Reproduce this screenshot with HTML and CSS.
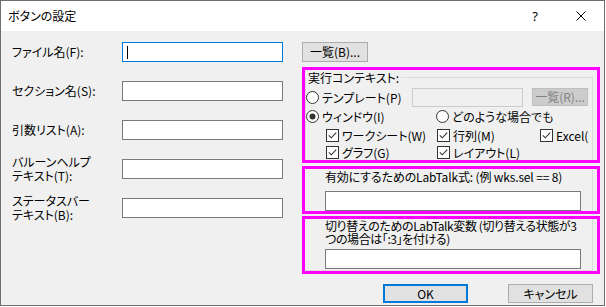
FILE: index.html
```html
<!DOCTYPE html>
<html lang="ja">
<head>
  <meta charset="UTF-8" />
  <title>ボタンの設定</title>
  <link rel="stylesheet" href="styles.css">
</head>
<body>
  <div class="window">
    <div class="titlebar">
      <span class="title">ボタンの設定</span>
      <div class="caption">
        <span class="cap-btn help">?</span>
        <span class="cap-btn">
          <svg width="10" height="10" viewBox="0 0 10 10"><path d="M0.5 0.5 L9.5 9.5 M9.5 0.5 L0.5 9.5" stroke="#000" stroke-width="1" fill="none"/></svg>
        </span>
      </div>
    </div>

    <div class="client">
      <div class="main">
        <div class="fields">
          <label>ファイル名(F):</label>
          <div class="edit focused"><span class="caret"></span></div>
          <label>セクション名(S):</label>
          <div class="edit"></div>
          <label>引数リスト(A):</label>
          <div class="edit"></div>
          <label>バルーンヘルプ<br>テキスト(T):</label>
          <div class="edit"></div>
          <label>ステータスバー<br>テキスト(B):</label>
          <div class="edit"></div>
        </div>

        <div class="side">
          <div class="btn btn-browse">一覧(B)...</div>

          <div class="mark box-context">
            <div class="group">
              <div class="group-title">実行コンテキスト:</div>

              <div class="row row-1">
                <div class="opt opt-template">
                  <svg class="radio" width="13" height="13" viewBox="0 0 13 13"><circle cx="6.5" cy="6.5" r="6" fill="#fff" stroke="#333"/></svg>
                  <span>テンプレート(P)</span>
                </div>
                <div class="edit disabled edit-template"></div>
                <div class="btn disabled btn-list">一覧(R)...</div>
              </div>

              <div class="row row-2">
                <div class="opt opt-window">
                  <svg class="radio" width="13" height="13" viewBox="0 0 13 13"><circle cx="6.5" cy="6.5" r="6" fill="#fff" stroke="#333"/><circle cx="6.5" cy="6.5" r="3" fill="#333"/></svg>
                  <span>ウィンドウ(I)</span>
                </div>
                <div class="opt">
                  <svg class="radio" width="13" height="13" viewBox="0 0 13 13"><circle cx="6.5" cy="6.5" r="6" fill="#fff" stroke="#333"/></svg>
                  <span>どのような場合でも</span>
                </div>
              </div>

              <div class="row row-3 checks">
                <div class="opt col-a">
                  <svg class="check" width="13" height="13" viewBox="0 0 13 13"><rect x="0.5" y="0.5" width="12" height="12" fill="#fff" stroke="#333"/><path d="M2.8 6.3 L5.3 8.8 L10.2 3.6" fill="none" stroke="#333" stroke-width="1.1"/></svg>
                  <span>ワークシート(W)</span>
                </div>
                <div class="opt col-b">
                  <svg class="check" width="13" height="13" viewBox="0 0 13 13"><rect x="0.5" y="0.5" width="12" height="12" fill="#fff" stroke="#333"/><path d="M2.8 6.3 L5.3 8.8 L10.2 3.6" fill="none" stroke="#333" stroke-width="1.1"/></svg>
                  <span>行列(M)</span>
                </div>
                <div class="opt col-c">
                  <svg class="check" width="13" height="13" viewBox="0 0 13 13"><rect x="0.5" y="0.5" width="12" height="12" fill="#fff" stroke="#333"/><path d="M2.8 6.3 L5.3 8.8 L10.2 3.6" fill="none" stroke="#333" stroke-width="1.1"/></svg>
                  <span>Excel(</span>
                </div>
              </div>

              <div class="row row-4 checks">
                <div class="opt col-a">
                  <svg class="check" width="13" height="13" viewBox="0 0 13 13"><rect x="0.5" y="0.5" width="12" height="12" fill="#fff" stroke="#333"/><path d="M2.8 6.3 L5.3 8.8 L10.2 3.6" fill="none" stroke="#333" stroke-width="1.1"/></svg>
                  <span>グラフ(G)</span>
                </div>
                <div class="opt col-b">
                  <svg class="check" width="13" height="13" viewBox="0 0 13 13"><rect x="0.5" y="0.5" width="12" height="12" fill="#fff" stroke="#333"/><path d="M2.8 6.3 L5.3 8.8 L10.2 3.6" fill="none" stroke="#333" stroke-width="1.1"/></svg>
                  <span>レイアウト(L)</span>
                </div>
              </div>
            </div>
          </div>

          <div class="mark box-enable">
            <div class="inner">
              <p class="caption-text">有効にするためのLabTalk式: (例 wks.sel == 8)</p>
              <div class="edit wide"></div>
            </div>
          </div>

          <div class="mark box-toggle">
            <div class="inner">
              <p class="caption-text two">切り替えのためのLabTalk変数 (切り替える状態が3<br>つの場合は「:3」を付ける)</p>
              <div class="edit wide"></div>
            </div>
          </div>
        </div>
      </div>

      <div class="footer">
        <div class="btn default">OK</div>
        <div class="btn">キャンセル</div>
      </div>
    </div>
  </div>
</body>
</html>
```

FILE: styles.css
```css
* {
  box-sizing: border-box;
  margin: 0;
  padding: 0;
}

body {
  font-family: "Noto Sans CJK JP", "Noto Sans", sans-serif;
  font-size: 12px;
  font-feature-settings: "palt";
  color: #000;
  background: #fff;
}

.window {
  width: 605px;
  height: 306px;
  border: 1px solid #6e6e6e;
  display: flex;
  flex-direction: column;
}

.titlebar {
  height: 30px;
  background: #fff;
  display: flex;
  align-items: center;
  justify-content: space-between;
}

.title {
  padding-left: 7px;
  line-height: 14px;
}

.caption {
  display: flex;
  height: 100%;
}

.cap-btn {
  width: 46px;
  display: flex;
  align-items: center;
  justify-content: center;
}

.cap-btn.help {
  font-family: "Noto Sans", sans-serif;
  font-size: 13px;
}

.client {
  flex: 1;
  background: #f0f0f0;
}

.main {
  display: flex;
  gap: 19px;
  padding-left: 11px;
}

.fields {
  display: grid;
  grid-template-columns: 110px 161px;
  grid-auto-rows: 20px;
  row-gap: 19px;
  padding-top: 11px;
  align-items: center;
}

.fields label {
  line-height: 14px;
}

.edit {
  height: 20px;
  background: #fff;
  border: 1px solid #7a7a7a;
  display: flex;
  align-items: center;
  padding-left: 4px;
}

.edit.focused {
  border-color: #0078d7;
}

.caret {
  width: 1px;
  height: 13px;
  background: #000;
}

.edit.disabled {
  background: #f0f0f0;
  border-color: #cccccc;
}

.btn {
  height: 20px;
  background: #e1e1e1;
  border: 1px solid #adadad;
  display: flex;
  align-items: center;
  justify-content: center;
  line-height: 14px;
}

.btn.disabled {
  background: #cccccc;
  border-color: #bfbfbf;
  color: #838383;
}

.side {
  width: 298px;
  padding-top: 11px;
}

.btn-browse {
  width: 66px;
}

/* magenta highlight frames */
.mark {
  border: 3px solid #ff00ff;
  overflow: hidden;
}

.box-context {
  height: 96px;
  margin-top: 5px;
}

.group {
  height: 100%;
  margin-top: 7px;
  margin-right: 4px;
  border: 1px solid #dcdcdc;
  border-bottom: none;
}

.group-title {
  width: fit-content;
  margin: -7px 0 2px 0;
  padding: 0 2px;
  line-height: 14px;
  background: #f0f0f0;
}

.row {
  display: flex;
  align-items: center;
}

.row-1 { height: 20px; }
.row-2 { height: 19px; }
.row-3 { height: 18px; }
.row-4 { height: 16px; }

.checks {
  padding-left: 20px;
}

.opt {
  display: flex;
  align-items: center;
  gap: 3px;
  white-space: nowrap;
}

.opt svg {
  flex: none;
}

.opt-template { width: 106px; }
.opt-window { width: 130px; }
.col-a { width: 111px; }
.col-b { width: 103px; }
.col-c { width: 48px; overflow: hidden; }

.edit-template {
  width: 111px;
  height: 19px;
}

.btn-list {
  width: 56px;
  height: 18px;
  margin-left: 9px;
}

.box-enable {
  height: 48px;
  margin-top: 3px;
}

.box-toggle {
  height: 58px;
  margin-top: 2px;
}

.inner {
  height: 100%;
  margin-right: 4px;
  padding-left: 20px;
  border-right: 1px solid #dcdcdc;
}

.box-toggle .inner {
  border-bottom: 1px solid #dcdcdc;
}

.caption-text {
  line-height: 14px;
  margin-top: 1px;
  white-space: nowrap;
  letter-spacing: -0.15px;
}

.caption-text.two {
  line-height: 13px;
  margin-top: 0;
  letter-spacing: -0.4px;
}

.edit.wide {
  width: 256px;
  margin-top: 7px;
}

.box-toggle .edit.wide {
  margin-top: 4px;
}

.footer {
  display: flex;
  justify-content: flex-end;
  gap: 40px;
  padding-right: 11px;
  margin-top: 10px;
}

.footer .btn {
  width: 85px;
  height: 19px;
}

.btn.default {
  border: 2px solid #0078d7;
}
```
